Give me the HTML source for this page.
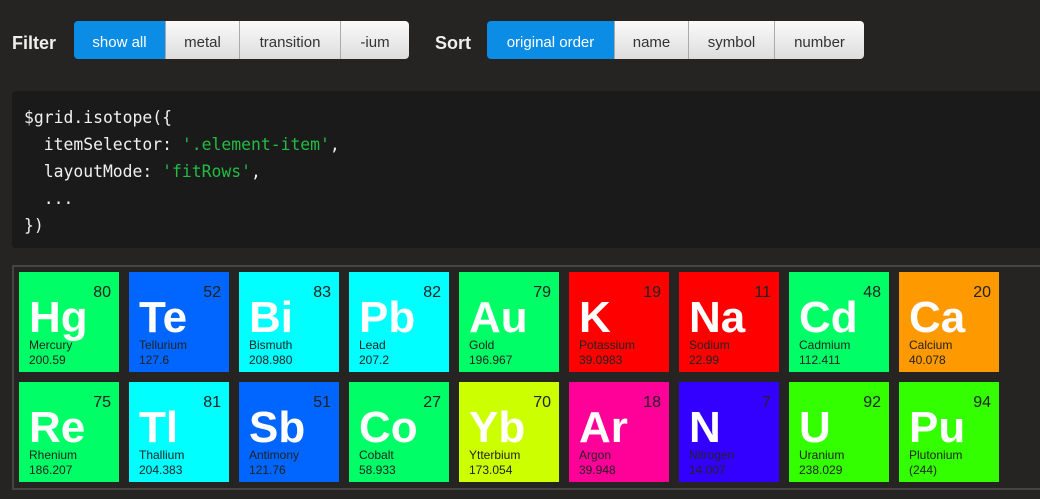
<!DOCTYPE html>
<html><head><style>
body{margin:0;background:#252423;width:1040px;height:499px;overflow:hidden;font-family:"Liberation Sans",sans-serif;}
.lbl{color:#eee;font-weight:bold;font-size:18px;position:absolute;top:33px}
.btn{position:absolute;top:21px;height:38px;background:linear-gradient(#fafafa,#ddd);color:#333;font-size:15px;line-height:43px;text-align:center;box-sizing:border-box;border-right:1px solid #aaa;overflow:hidden}
.btn.on{background:#0b8de6;color:#fff}
.code{position:absolute;left:12px;top:91px;width:1040px;height:157px;background:#1a1a1a;border-radius:4px;color:#f0f0f0;font-family:"DejaVu Sans Mono","Liberation Mono",monospace;font-size:16.4px;line-height:27px;padding:13px 0 0 12px;box-sizing:border-box;white-space:pre}
.s{color:#22bb44}
.grid{position:absolute;left:12px;top:265px;width:1040px;height:225px;border:2px solid #444;box-sizing:border-box}
.t{position:absolute;width:100px;height:100px;color:#222}
.t .n{position:absolute;right:8px;top:12px;font-size:16px}
.t .sy{position:absolute;left:10px;top:21px;font-size:44px;font-weight:bold;color:#fff;font-family:"Liberation Sans",sans-serif}
.t .nm{position:absolute;left:10px;top:66px;font-size:12px}
.t .w{position:absolute;left:10px;top:81px;font-size:12px}
</style></head><body>
<div class="lbl" style="left:12px">Filter</div>
<div class="btn on" style="left:74px;width:92px;border-radius:4px 0 0 4px">show all</div>
<div class="btn" style="left:166px;width:74px">metal</div>
<div class="btn" style="left:240px;width:101px">transition</div>
<div class="btn" style="left:341px;width:68px;border-radius:0 4px 4px 0;border:none">-ium</div>
<div class="lbl" style="left:435px">Sort</div>
<div class="btn on" style="left:487px;width:128px;border-radius:4px 0 0 4px">original order</div>
<div class="btn" style="left:615px;width:74px">name</div>
<div class="btn" style="left:689px;width:86px">symbol</div>
<div class="btn" style="left:775px;width:89px;border-radius:0 4px 4px 0;border:none">number</div>
<div class="code">$grid.isotope({
  itemSelector: <span class="s">'.element-item'</span>,
  layoutMode: <span class="s">'fitRows'</span>,
  ...
})</div>
<div class="grid"></div>
<div class="t" style="left:19px;top:272px;background:#00ff66"><span class="n">80</span><span class="sy">Hg</span><span class="nm">Mercury</span><span class="w">200.59</span></div>
<div class="t" style="left:129px;top:272px;background:#0066ff"><span class="n">52</span><span class="sy">Te</span><span class="nm">Tellurium</span><span class="w">127.6</span></div>
<div class="t" style="left:239px;top:272px;background:#00ffff"><span class="n">83</span><span class="sy">Bi</span><span class="nm">Bismuth</span><span class="w">208.980</span></div>
<div class="t" style="left:349px;top:272px;background:#00ffff"><span class="n">82</span><span class="sy">Pb</span><span class="nm">Lead</span><span class="w">207.2</span></div>
<div class="t" style="left:459px;top:272px;background:#00ff66"><span class="n">79</span><span class="sy">Au</span><span class="nm">Gold</span><span class="w">196.967</span></div>
<div class="t" style="left:569px;top:272px;background:#ff0000"><span class="n">19</span><span class="sy">K</span><span class="nm">Potassium</span><span class="w">39.0983</span></div>
<div class="t" style="left:679px;top:272px;background:#ff0000"><span class="n">11</span><span class="sy">Na</span><span class="nm">Sodium</span><span class="w">22.99</span></div>
<div class="t" style="left:789px;top:272px;background:#00ff66"><span class="n">48</span><span class="sy">Cd</span><span class="nm">Cadmium</span><span class="w">112.411</span></div>
<div class="t" style="left:899px;top:272px;background:#ff9900"><span class="n">20</span><span class="sy">Ca</span><span class="nm">Calcium</span><span class="w">40.078</span></div>
<div class="t" style="left:19px;top:382px;background:#00ff66"><span class="n">75</span><span class="sy">Re</span><span class="nm">Rhenium</span><span class="w">186.207</span></div>
<div class="t" style="left:129px;top:382px;background:#00ffff"><span class="n">81</span><span class="sy">Tl</span><span class="nm">Thallium</span><span class="w">204.383</span></div>
<div class="t" style="left:239px;top:382px;background:#0066ff"><span class="n">51</span><span class="sy">Sb</span><span class="nm">Antimony</span><span class="w">121.76</span></div>
<div class="t" style="left:349px;top:382px;background:#00ff66"><span class="n">27</span><span class="sy">Co</span><span class="nm">Cobalt</span><span class="w">58.933</span></div>
<div class="t" style="left:459px;top:382px;background:#ccff00"><span class="n">70</span><span class="sy">Yb</span><span class="nm">Ytterbium</span><span class="w">173.054</span></div>
<div class="t" style="left:569px;top:382px;background:#ff0099"><span class="n">18</span><span class="sy">Ar</span><span class="nm">Argon</span><span class="w">39.948</span></div>
<div class="t" style="left:679px;top:382px;background:#3300ff"><span class="n">7</span><span class="sy">N</span><span class="nm">Nitrogen</span><span class="w">14.007</span></div>
<div class="t" style="left:789px;top:382px;background:#33ff00"><span class="n">92</span><span class="sy">U</span><span class="nm">Uranium</span><span class="w">238.029</span></div>
<div class="t" style="left:899px;top:382px;background:#33ff00"><span class="n">94</span><span class="sy">Pu</span><span class="nm">Plutonium</span><span class="w">(244)</span></div>
</body></html>
